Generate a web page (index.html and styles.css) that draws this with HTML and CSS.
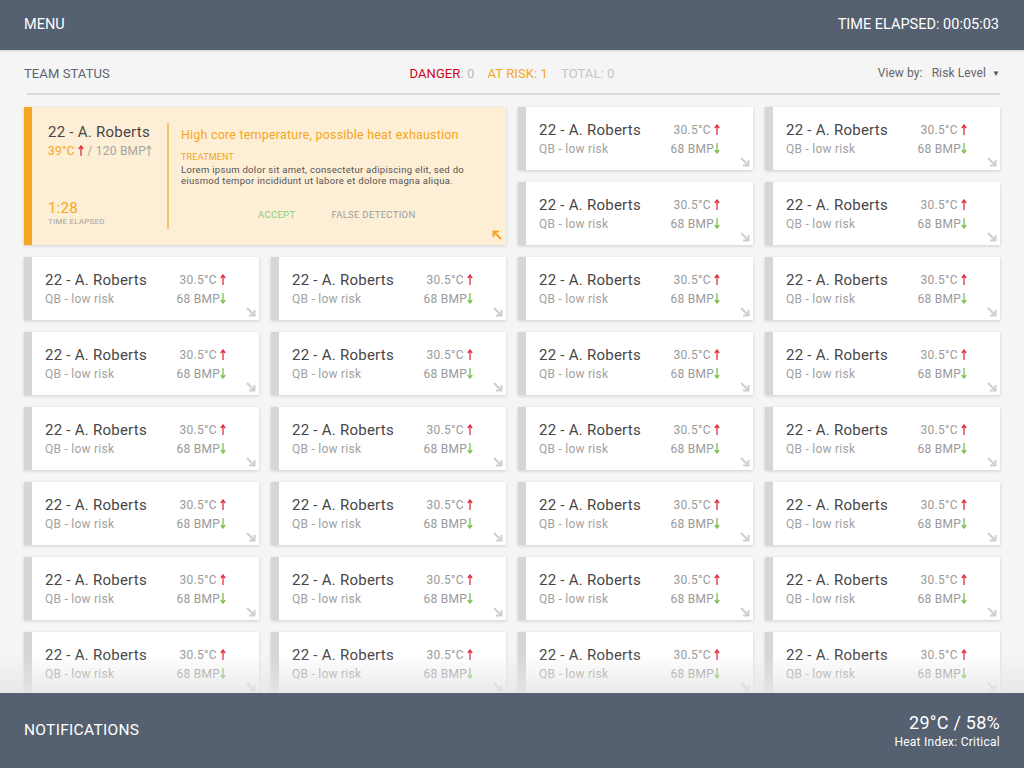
FILE: index.html
```html
<!DOCTYPE html>
<html>
<head>
<meta charset="utf-8">
<link rel="stylesheet" href="styles.css">
</head>
<body>
<header class="topbar">
  <div class="menu">MENU</div>
  <div class="timer">TIME ELAPSED: 00:05:03</div>
</header>
<main class="main">
  <div class="status">
    <div class="status-title">TEAM STATUS</div>
    <div class="counts">
      <span class="danger">DANGER</span><span class="muted">: 0</span>
      <span class="risk">AT RISK: 1</span>
      <span class="total">TOTAL: 0</span>
    </div>
    <div class="viewby"><span class="vb-label">View by:</span><span class="vb-value">Risk Level</span><span class="caret">▼</span></div>
  </div>
  <div class="rule"></div>
  <div class="grid">
    <div class="card card-alert">
      <div class="alert-left">
        <div>
          <div class="name">22 - A. Roberts</div>
          <div class="alert-vitals"><span class="orange">39°C</span> <svg class="arr up" viewBox="0 0 6 11"><path d="M3 11 V1.5 M0.8 4 L3 1 L5.2 4" fill="none" stroke="currentColor" stroke-width="1.3"/></svg> / 120 BMP<svg class="arr grey-arrow" viewBox="0 0 6 11"><path d="M3 11 V1.5 M0.8 4 L3 1 L5.2 4" fill="none" stroke="currentColor" stroke-width="1.1"/></svg></div>
        </div>
        <div>
          <div class="alert-time">1:28</div>
          <div class="alert-time-label">TIME ELAPSED</div>
        </div>
      </div>
      <div class="alert-right">
        <div class="alert-title">High core temperature, possible heat exhaustion</div>
        <div class="treat-label">TREATMENT</div>
        <div class="treat-text">Lorem ipsum dolor sit amet, consectetur adipiscing elit, sed do eiusmod tempor incididunt ut labore et dolore magna aliqua.</div>
        <div class="actions"><span class="accept">ACCEPT</span><span class="false">FALSE DETECTION</span></div>
      </div>
      <svg class="corner corner-up" viewBox="0 0 10 10"><path d="M9 9 L2 2 M1.5 7 V1.5 H7" fill="none" stroke="currentColor" stroke-width="2"/></svg>
    </div>
    <div class="card"><div class="info"><div class="name">22 - A. Roberts</div><div class="role">QB - low risk</div></div><div class="vitals"><div>30.5°C <svg class="arr up" viewBox="0 0 6 11"><path d="M3 11 V1.5 M0.8 4 L3 1 L5.2 4" fill="none" stroke="currentColor" stroke-width="1.3"/></svg></div><div>68 BMP<svg class="arr down" viewBox="0 0 6 11"><path d="M3 0 V9.5 M0.8 7 L3 10 L5.2 7" fill="none" stroke="currentColor" stroke-width="1.3"/></svg></div></div><svg class="corner" viewBox="0 0 10 10"><path d="M1 1 L8 8 M8.5 3 V8.5 H3" fill="none" stroke="currentColor" stroke-width="2"/></svg></div>
  </div>
  <div class="fade"></div>
</main>
<footer class="bottombar">
  <div class="notif">NOTIFICATIONS</div>
  <div class="weather">
    <div class="weather-main">29°C / 58%</div>
    <div class="weather-sub">Heat Index: Critical</div>
  </div>
</footer>
<script src="app.js"></script>
</body>
</html>
```

FILE: app.js
```js
(function () {
  var grid = document.querySelector('.grid');
  var tpl = grid.querySelector('.card:not(.card-alert)');
  for (var i = 0; i < 27; i++) {
    grid.appendChild(tpl.cloneNode(true));
  }
})();
```

FILE: styles.css
```css
* { box-sizing: border-box; }
html, body { margin: 0; padding: 0; }
body {
  width: 1024px;
  height: 768px;
  overflow: hidden;
  display: flex;
  flex-direction: column;
  font-family: Roboto, "Liberation Sans", sans-serif;
  background: #f5f5f5;
  color: #333;
  letter-spacing: 0.25px;
}
.topbar {
  height: 50px;
  flex: 0 0 50px;
  background: #556171;
  color: #fff;
  display: flex;
  align-items: center;
  justify-content: space-between;
  padding: 0 25px 1px 24px;
  font-size: 14.5px;
  letter-spacing: 0;
  box-shadow: 0 1px 2px rgba(0,0,0,0.15);
  position: relative;
  z-index: 2;
}
.main {
  flex: 1;
  overflow: hidden;
  padding: 0 24px;
  position: relative;
}
.status {
  height: 43px;
  display: grid;
  grid-template-columns: 1fr auto 1fr;
  align-items: center;
  font-size: 13px;
  padding-top: 3px;
}
.status-title { color: #5d6573; letter-spacing: 0.1px; }
.counts { display: flex; gap: 13px; letter-spacing: 0.1px; }
.counts .danger { color: #d0021b; }
.counts .muted { color: #bbb; margin-left: -13px; }
.counts .risk { color: #f5a623; }
.counts .total { color: #c4c4c4; }
.viewby { justify-self: end; color: #666; font-size: 12px; letter-spacing: 0.1px; display: flex; align-items: center; }
.vb-label { margin-right: 9px; }
.caret { font-size: 8px; margin-left: 6px; color: #555; }
.rule { height: 2px; background: #dcdcdc; margin: 0 0 12px 3px; }
.grid {
  display: grid;
  grid-template-columns: repeat(4, 1fr);
  grid-auto-rows: 63px;
  gap: 12px;
}
.card {
  position: relative;
  background: #fff;
  border-left: 8px solid #d6d6d6;
  box-shadow: 0 1px 3px rgba(0,0,0,0.16);
  display: flex;
  justify-content: space-between;
  padding: 14px 33px 0 13px;
}
.name { font-size: 15px; line-height: 18px; color: #474747; }
.role { font-size: 12px; line-height: 16px; color: #a2a2a2; margin-top: 2px; }
.vitals { font-size: 12px; line-height: 19px; color: #9a9a9a; text-align: right; }
.arr { width: 6px; height: 11px; display: inline-block; vertical-align: -1px; }
.up { color: #e0323f; }
.down { color: #7cc152; }
.corner {
  position: absolute;
  right: 3px;
  bottom: 3px;
  width: 10px;
  height: 10px;
  color: #cfcfcf;
}
.card-alert {
  grid-column: 1 / 3;
  grid-row: 1 / 3;
  background: #fdeed6;
  border-left-color: #f5a623;
  padding: 16px 16px 16px 16px;
  justify-content: flex-start;
}
.corner-up { color: #f5a623; right: 4px; bottom: 5px; }
.alert-left {
  width: 121px;
  border-right: 2px solid #f7c571;
  display: flex;
  flex-direction: column;
  justify-content: space-between;
  flex: 0 0 121px;
}
.alert-vitals { font-size: 12px; line-height: 16px; color: #a5a5a5; margin-top: 2px; }
.orange { color: #f5a623; }
.grey-arrow { color: #a5a5a5; }
.alert-time { font-size: 15px; line-height: 17px; color: #f5a623; }
.alert-time-label { font-size: 8px; line-height: 10px; color: #a5a5a5; letter-spacing: 0.2px; margin-bottom: 2px; }
.alert-right { padding-left: 12px; flex: 1; display: flex; flex-direction: column; }
.alert-title { font-size: 12.5px; line-height: 16px; color: #f5a623; margin-top: 4px; letter-spacing: 0.2px; }
.treat-label { font-size: 9px; line-height: 11px; color: #f5a623; margin-top: 9px; letter-spacing: 0.2px; }
.treat-text { font-size: 9.5px; line-height: 11px; color: #555; letter-spacing: 0.3px; padding-right: 12px; margin-top: 1px; }
.actions { margin-top: 23px; padding-left: 77px; font-size: 9.5px; display: flex; gap: 36px; letter-spacing: 0.3px; }
.accept { color: #8fcc7a; }
.false { color: #9e9e9e; }
.fade {
  position: absolute;
  left: 0;
  right: 0;
  bottom: 0;
  height: 38px;
  background: linear-gradient(to bottom, rgba(245,245,245,0), rgba(230,230,230,0.85));
  pointer-events: none;
}
.bottombar {
  height: 75px;
  flex: 0 0 75px;
  background: #556171;
  color: #fff;
  display: flex;
  align-items: center;
  justify-content: space-between;
  padding: 0 24px 0 24px;
  position: relative;
  z-index: 2;
}
.notif { font-size: 15.5px; letter-spacing: 0.3px; margin-top: -2px; }
.weather { text-align: right; margin-top: -1px; }
.weather-main { font-size: 18px; line-height: 22px; }
.weather-sub { font-size: 12px; line-height: 14px; margin-top: 1px; }
```
